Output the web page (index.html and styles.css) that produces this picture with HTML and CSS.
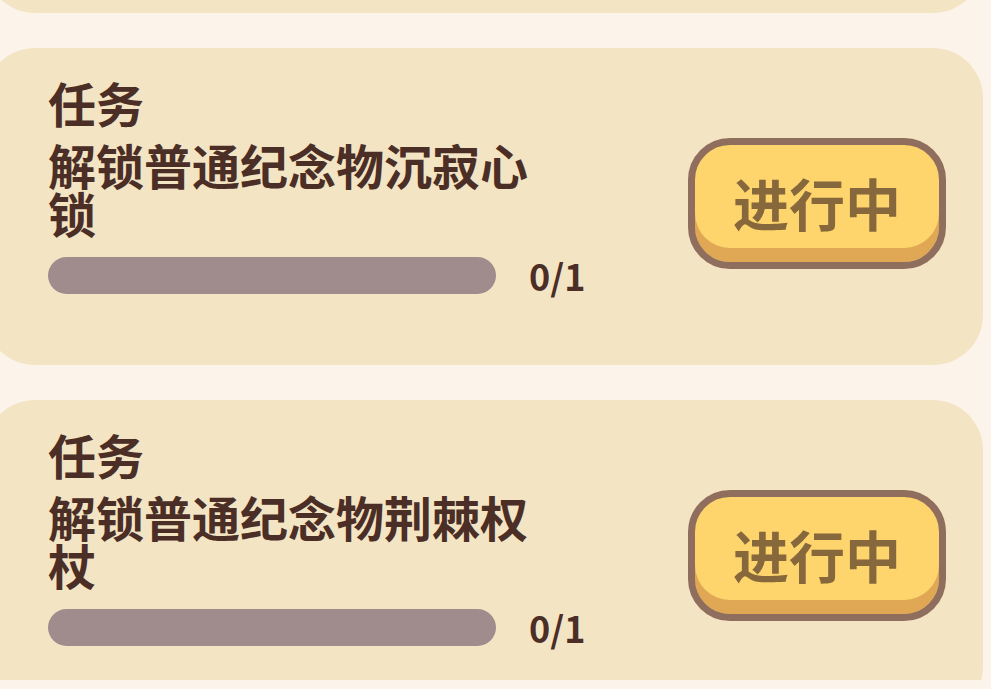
FILE: index.html
```html
<!DOCTYPE html>
<html lang="zh-CN">
<head>
<meta charset="utf-8">
<title>任务</title>
<link rel="stylesheet" href="styles.css">
</head>
<body>
<div class="viewport">
  <div class="list">
    <div class="card card-offscreen"></div>
    <div class="card">
      <div class="info">
        <div class="title">任务</div>
        <div class="desc">解锁普通纪念物沉寂心锁</div>
        <div class="progress-row">
          <div class="bar"></div>
          <span class="count">0/1</span>
        </div>
      </div>
      <button class="btn">进行中</button>
    </div>
    <div class="card">
      <div class="info">
        <div class="title">任务</div>
        <div class="desc">解锁普通纪念物荆棘权杖</div>
        <div class="progress-row">
          <div class="bar"></div>
          <span class="count">0/1</span>
        </div>
      </div>
      <button class="btn">进行中</button>
    </div>
  </div>
</div>
</body>
</html>
```

FILE: styles.css
```css
html, body {
  margin: 0;
  padding: 0;
  background: #fcf4ea;
}

body {
  font-family: "Noto Sans CJK SC", "Noto Sans", sans-serif;
  color: #4b2e26;
}

.viewport {
  width: 991px;
  height: 680px;
  overflow: hidden;
  background: #fcf4ea;
}

.list {
  display: flex;
  flex-direction: column;
  gap: 35px;
  margin-top: -304px;
  margin-left: -15px;
  margin-right: 8px;
}

.card {
  display: flex;
  align-items: center;
  justify-content: space-between;
  height: 317px;
  box-sizing: border-box;
  padding: 30px 37px 71px 63px;
  background: #f3e4c4;
  border-radius: 50px;
}

.info {
  display: flex;
  flex-direction: column;
  align-self: flex-start;
}

.title {
  font-size: 48px;
  line-height: 48px;
  font-weight: 700;
}

.desc {
  width: 500px;
  margin-top: 14px;
  font-size: 48px;
  line-height: 48px;
  font-weight: 700;
}

.progress-row {
  display: flex;
  align-items: center;
  gap: 33px;
  margin-top: 21px;
}

.bar {
  width: 448px;
  height: 37px;
  border-radius: 19px;
  background: #a08c8c;
}

.count {
  font-size: 36px;
  line-height: 37px;
  font-weight: 700;
  color: #4b2e26;
}

.btn {
  width: 258px;
  height: 131px;
  box-sizing: border-box;
  margin-top: 34px;
  border: 7px solid #8f6e5e;
  border-radius: 42px;
  background: #fdd56c;
  box-shadow: inset 0 -14px 0 #e0a855;
  font-family: "Noto Sans CJK SC", sans-serif;
  font-size: 56px;
  font-weight: 700;
  line-height: 1;
  color: #86683c;
  padding: 0 0 2px 0;
  cursor: pointer;
}
```
